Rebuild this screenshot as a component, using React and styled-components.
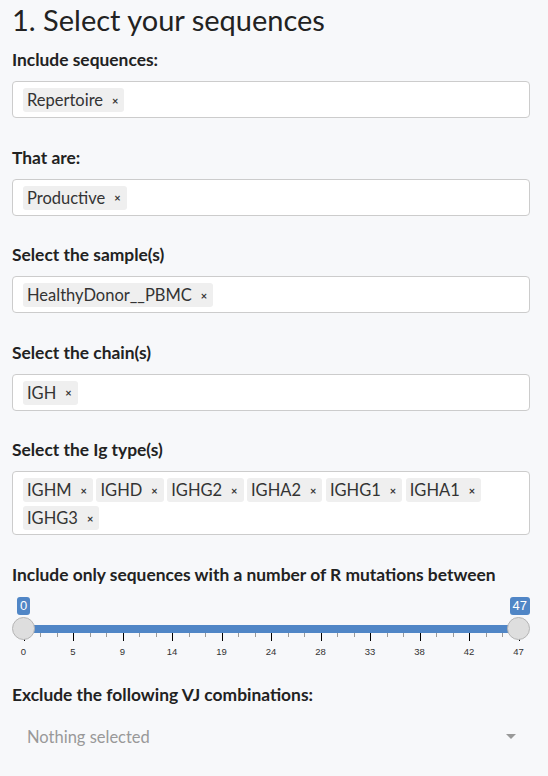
import React from 'react'
import styled, { createGlobalStyle } from 'styled-components'

const GlobalStyle = createGlobalStyle`
  body {
    margin: 0;
    background: #f7f8fa;
    font-family: Lato, "Liberation Sans", sans-serif;
    color: #212529;
  }
`

const fields = [
  { label: 'Include sequences:', tags: ['Repertoire'] },
  { label: 'That are:', tags: ['Productive'] },
  { label: 'Select the sample(s)', tags: ['HealthyDonor__PBMC'] },
  { label: 'Select the chain(s)', tags: ['IGH'] },
  { label: 'Select the Ig type(s)', tags: ['IGHM', 'IGHD', 'IGHG2', 'IGHA2', 'IGHG1', 'IGHA1', 'IGHG3'] },
]

const gridLabels = [0, 5, 9, 14, 19, 24, 28, 33, 38, 42, 47]

function App() {
  return (
    <>
      <GlobalStyle />
      <Page>
        <Title>1. Select your sequences</Title>
        {fields.map(f => (
          <Group key={f.label}>
            <Label>{f.label}</Label>
            <TagBox>
              {f.tags.map(t => (
                <Tag key={t}>
                  {t}
                  <Remove>×</Remove>
                </Tag>
              ))}
            </TagBox>
          </Group>
        ))}
        <Group tight>
          <Label>Include only sequences with a number of R mutations between</Label>
          <Slider>
            <Bubble side="left">0</Bubble>
            <Bubble side="right">47</Bubble>
            <Track />
            <Knob side="left" />
            <Knob side="right" />
            <Grid>
              {gridLabels.map((v, i) => (
                <React.Fragment key={v}>
                  <Tick major style={{ left: `${(i / 10) * 100}%` }} />
                  {i < 10 && <Tick style={{ left: `${((i + 1 / 3) / 10) * 100}%` }} />}
                  {i < 10 && <Tick style={{ left: `${((i + 2 / 3) / 10) * 100}%` }} />}
                  <GridText style={{ left: `${(i / 10) * 100}%` }}>{v}</GridText>
                </React.Fragment>
              ))}
            </Grid>
          </Slider>
        </Group>
        <Group>
          <Label>Exclude the following VJ combinations:</Label>
          <SelectBox>
            <Placeholder>Nothing selected</Placeholder>
            <Caret />
          </SelectBox>
        </Group>
      </Page>
    </>
  )
}

export default App

const Page = styled.div`
  width: 548px;
  height: 776px;
  overflow: hidden;
  box-sizing: border-box;
  padding: 0 18px 0 12px;
`
const Title = styled.h3`
  margin: 0 0 8px 0;
  font-size: 29px;
  font-weight: 400;
  line-height: 40px;
  color: #222;
`
const Group = styled.div`
  margin-bottom: ${p => (p.tight ? '22px' : '27.5px')};
`
const Label = styled.div`
  font-size: 17.4px;
  font-weight: 700;
  line-height: 24px;
  margin-bottom: 9px;
  color: #222;
`
const TagBox = styled.div`
  box-sizing: border-box;
  min-height: 37px;
  background: #fff;
  border: 1px solid #ccc;
  border-radius: 4px;
  padding: 6px 10px 4px 10px;
  display: flex;
  flex-wrap: wrap;
  gap: 4px 3.5px;
`
const Tag = styled.div`
  display: flex;
  align-items: center;
  height: 24px;
  background: #efefef;
  border-radius: 3px;
  padding: 0 6px 0 4px;
  font-size: 16.5px;
  color: #333;
`
const Remove = styled.span`
  margin-left: 9px;
  font-size: 11px;
  font-weight: 700;
  color: #333;
`
const Slider = styled.div`
  position: relative;
  height: 66px;
  margin-top: -1px;
`
const Bubble = styled.div`
  position: absolute;
  top: 2px;
  ${p => (p.side === 'left' ? 'left: 5px;' : 'right: 0px;')}
  background: #5086c6;
  color: #fff;
  font-family: "Liberation Sans", Arial, sans-serif;
  font-size: 13px;
  line-height: 18px;
  padding: 0 3px;
  border-radius: 3px;
`
const Track = styled.div`
  position: absolute;
  top: 30px;
  left: 11px;
  right: 11px;
  height: 8px;
  background: #5086c6;
`
const Knob = styled.div`
  position: absolute;
  top: 22px;
  ${p => (p.side === 'left' ? 'left: 0;' : 'right: 0;')}
  width: 23px;
  height: 23px;
  box-sizing: border-box;
  border-radius: 50%;
  background: #dedede;
  border: 1px solid #b5b5b5;
  z-index: 2;
`
const Grid = styled.div`
  position: absolute;
  top: 38px;
  left: 11.5px;
  right: 11.5px;
  height: 28px;
`
const Tick = styled.div`
  position: absolute;
  top: 0;
  width: 1px;
  height: ${p => (p.major ? '8px' : '4px')};
  background: ${p => (p.major ? '#000' : '#999')};
`
const GridText = styled.div`
  position: absolute;
  top: 13px;
  transform: translateX(-50%);
  font-family: "Liberation Sans", Arial, sans-serif;
  font-size: 9.5px;
  color: #333;
`
const SelectBox = styled.div`
  display: flex;
  align-items: center;
  justify-content: space-between;
  height: 36px;
  padding: 3px 14px 0 15px;
`
const Placeholder = styled.span`
  font-size: 16.5px;
  color: #999;
`
const Caret = styled.span`
  width: 0;
  height: 0;
  border-left: 5px solid transparent;
  border-right: 5px solid transparent;
  border-top: 5px solid #999;
`
